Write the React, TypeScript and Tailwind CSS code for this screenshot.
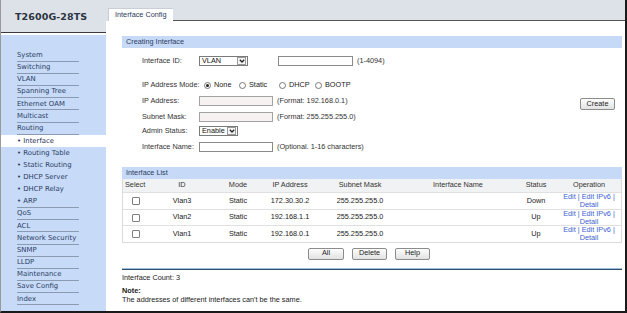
type MenuItem = { label: string; active?: boolean; line?: boolean };

const menu: MenuItem[] = [
  { label: 'System', line: true },
  { label: 'Switching', line: true },
  { label: 'VLAN', line: true },
  { label: 'Spanning Tree', line: true },
  { label: 'Ethernet OAM', line: true },
  { label: 'Multicast', line: true },
  { label: 'Routing', line: true },
  { label: '• Interface', active: true },
  { label: '• Routing Table' },
  { label: '• Static Routing' },
  { label: '• DHCP Server' },
  { label: '• DHCP Relay' },
  { label: '• ARP', line: true },
  { label: 'QoS', line: true },
  { label: 'ACL', line: true },
  { label: 'Network Security', line: true },
  { label: 'SNMP', line: true },
  { label: 'LLDP', line: true },
  { label: 'Maintenance', line: true },
  { label: 'Save Config', line: true },
  { label: 'Index', line: true },
];

const rows = [
  { id: 'Vlan3', mode: 'Static', ip: '172.30.30.2', mask: '255.255.255.0', status: 'Down' },
  { id: 'Vlan2', mode: 'Static', ip: '192.168.1.1', mask: '255.255.255.0', status: 'Up' },
  { id: 'Vlan1', mode: 'Static', ip: '192.168.0.1', mask: '255.255.255.0', status: 'Up' },
];

const cols = 'grid grid-cols-[26px_66px_46px_58px_82px_114px_42px_64px]';

const Chevron = () => (
  <svg width="6" height="4" viewBox="0 0 6 4">
    <path d="M0.8 0.8 L3 3 L5.2 0.8" fill="none" stroke="#222" strokeWidth="1.3" />
  </svg>
);

const FakeSelect = ({ value, width }: { value: string; width: string }) => (
  <div className={`${width} h-[10px] border border-[#7a7a7a] bg-white flex items-center justify-between pl-[2px]`}>
    <span className="leading-none text-[#111]">{value}</span>
    <div className="w-[9px] h-[8px] mr-[1px] border border-[#9a9a9a] flex items-center justify-center bg-[#f4f4f4]">
      <Chevron />
    </div>
  </div>
);

const Radio = ({ checked }: { checked?: boolean }) => (
  <div className="w-[7px] h-[7px] rounded-full border border-[#777] bg-white flex items-center justify-center mr-[3px]">
    {checked && <div className="w-[3px] h-[3px] rounded-full bg-[#222]" />}
  </div>
);

const Btn = ({ children, w }: { children: string; w: string }) => (
  <div className={`${w} h-[12px] flex items-center justify-center border border-[#8c8c8c] rounded-[2px] bg-gradient-to-b from-[#fdfdfd] to-[#e2e2e2] text-[#222]`}>
    {children}
  </div>
);

const FormRow = ({ label, children, className = '' }: { label: string; children?: React.ReactNode; className?: string }) => (
  <div className={`flex items-center h-[12px] ${className}`}>
    <div className="w-[57px] whitespace-nowrap text-[#333]">{label}</div>
    {children}
  </div>
);

export default function App() {
  return (
    <div className="w-[627px] h-[313px] flex bg-white border-l border-r-2 border-b-2 border-l-[#9a9a9a] border-r-[#1a1a1a] border-b-[#1a1a1a] overflow-hidden font-['Liberation_Sans',Arial,sans-serif] text-[7.3px]">
      {/* Sidebar */}
      <div className="w-[105px] flex flex-col shrink-0">
        <div className="h-[33px] bg-[#dde2e9] border-b border-[#3a3a3a] flex items-center pl-[14px] pt-[3px]">
          <span className="font-['DejaVu_Sans',sans-serif] font-bold text-[9.5px] text-[#2b3340] tracking-[0.1px]">T2600G-28TS</span>
        </div>
        <div className="h-[2px] bg-white" />
        <div className="flex-1 bg-[#c7daf7] pt-[14.5px] font-['DejaVu_Sans',sans-serif] text-[6.9px] text-[#2b3e64]">
          {menu.map((m) => (
            <div key={m.label} className={`h-[12.2px] ${m.active ? 'bg-white' : ''}`}>
              <div className={`ml-[16px] w-[62px] h-full flex items-center whitespace-nowrap ${m.line ? 'border-b border-[#8b9ab3]' : ''} ${m.active ? 'text-[#1f3358]' : ''}`}>
                {m.label}
              </div>
            </div>
          ))}
        </div>
      </div>

      {/* Content */}
      <div className="flex-1 flex flex-col">
        <div className="h-[21px] bg-[#dde2e9] flex items-end">
          <div className="ml-[2px] w-[65px] h-[13px] bg-white border-l border-t border-[#c9ced6] flex items-center pl-[6px] text-[#2b3b5b]">
            Interface Config
          </div>
          <div className="flex-1 h-full border-b border-[#555]" />
        </div>

        <div className="pl-[16px] pr-[5px] flex flex-col">
          <div className="mt-[15px] h-[12px] bg-[#c6d9f7] flex items-center pl-[4px] text-[#2c3d63]">Creating Interface</div>

          <div className="flex">
            <div className="flex-1 flex flex-col pl-[20px]">
              <FormRow label="Interface ID:" className="mt-[7px]">
                <FakeSelect value="VLAN" width="w-[49px]" />
                <div className="ml-[30px] w-[75px] h-[10px] border border-[#8a8a8a] bg-white" />
                <span className="ml-[4px] text-[#333]">(1-4094)</span>
              </FormRow>
              <FormRow label="IP Address Mode:" className="mt-[12px]">
                <div className="flex items-center ml-[5px] text-[#222]">
                  <div className="flex items-center w-[35px]"><Radio checked />None</div>
                  <div className="flex items-center w-[40px]"><Radio />Static</div>
                  <div className="flex items-center w-[36px]"><Radio />DHCP</div>
                  <div className="flex items-center"><Radio />BOOTP</div>
                </div>
              </FormRow>
              <FormRow label="IP Address:" className="mt-[4px]">
                <div className="w-[74px] h-[10px] border border-[#a3a3a3] bg-[#f7f2f2]" />
                <span className="ml-[4px] text-[#333]">(Format: 192.168.0.1)</span>
              </FormRow>
              <FormRow label="Subnet Mask:" className="mt-[4px]">
                <div className="w-[74px] h-[10px] border border-[#a3a3a3] bg-[#f7f2f2]" />
                <span className="ml-[4px] text-[#333]">(Format: 255.255.255.0)</span>
              </FormRow>
              <FormRow label="Admin Status:" className="mt-[2px]">
                <FakeSelect value="Enable" width="w-[39px]" />
              </FormRow>
              <FormRow label="Interface Name:" className="mt-[4px]">
                <div className="w-[74px] h-[10px] border border-[#8a8a8a] bg-white" />
                <span className="ml-[4px] text-[#333]">(Optional. 1-16 characters)</span>
              </FormRow>
            </div>
            <div className="pt-[50px] pr-[7px]">
              <Btn w="w-[35px]">Create</Btn>
            </div>
          </div>

          <div className="mt-[14px] h-[12px] bg-[#c6d9f7] flex items-center pl-[4px] text-[#2c3d63]">Interface List</div>
          <div className="border-l border-r border-b border-[#dadada]">
            <div className={`${cols} h-[13px] items-center bg-[#f1f2f4] text-[#333] text-center`}>
              <div className="text-left pl-[2px]">Select</div>
              <div>ID</div>
              <div>Mode</div>
              <div>IP Address</div>
              <div>Subnet Mask</div>
              <div>Interface Name</div>
              <div>Status</div>
              <div>Operation</div>
            </div>
            {rows.map((r) => (
              <div key={r.id} className={`${cols} h-[16.5px] items-center border-t border-[#e0e0e0] text-[#222] text-center`}>
                <div className="flex justify-center">
                  <div className="w-[8px] h-[8px] border border-[#7d7d7d] bg-white rounded-[1px]" />
                </div>
                <div>{r.id}</div>
                <div>{r.mode}</div>
                <div>{r.ip}</div>
                <div>{r.mask}</div>
                <div />
                <div>{r.status}</div>
                <div className="text-[#3d5fd0] leading-[8px]">
                  Edit | Edit IPv6 |<br />Detail
                </div>
              </div>
            ))}
          </div>

          <div className="mt-[5px] flex justify-center gap-[8px] pr-[6px]">
            <Btn w="w-[36px]">All</Btn>
            <Btn w="w-[35px]">Delete</Btn>
            <Btn w="w-[35px]">Help</Btn>
          </div>

          <div className="mt-[8px] h-[1px] bg-[#9cc0de]" />
          <div className="h-[1.5px] bg-[#2e506e]" />

          <div className="mt-[4px] h-[9px] flex items-center text-[#222]">Interface Count: 3</div>
          <div className="mt-[4px] h-[9px] flex items-center font-bold text-[#222]">Note:</div>
          <div className="h-[9px] flex items-center text-[#222]">The addresses of different interfaces can't be the same.</div>
        </div>
      </div>
    </div>
  );
}
